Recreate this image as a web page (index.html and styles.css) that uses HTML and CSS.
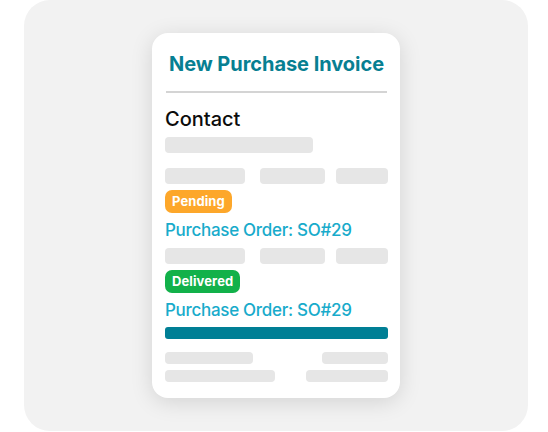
FILE: index.html
```html
<!DOCTYPE html>
<html>
<head>
<meta charset="utf-8">
<link rel="stylesheet" href="styles.css">
</head>
<body>
<div class="panel">
  <div class="card">
    <h1 class="title">New Purchase Invoice</h1>
    <div class="divider"></div>
    <div class="label">Contact</div>
    <div class="skel skel-contact"></div>
    <div class="row3 row-a">
      <div class="skel w80"></div>
      <div class="skel w65"></div>
      <div class="skel w52"></div>
    </div>
    <div class="badge pending">Pending</div>
    <div class="order">Purchase Order: SO#29</div>
    <div class="row3 row-b">
      <div class="skel w80"></div>
      <div class="skel w65"></div>
      <div class="skel w52"></div>
    </div>
    <div class="badge delivered">Delivered</div>
    <div class="order order-b">Purchase Order: SO#29</div>
    <div class="progress"></div>
    <div class="split split-a">
      <div class="skel thin w88"></div>
      <div class="skel thin w66"></div>
    </div>
    <div class="split split-b">
      <div class="skel thin w110"></div>
      <div class="skel thin w82"></div>
    </div>
  </div>
</div>
</body>
</html>
```
FILE: styles.css
```css
* { box-sizing: border-box; }
html, body { margin: 0; padding: 0; background: #ffffff; }
body {
  width: 548px;
  height: 432px;
  overflow: hidden;
  font-family: Inter, "Liberation Sans", sans-serif;
}
.panel {
  margin-left: 24px;
  width: 504px;
  height: 431px;
  background: #f2f2f2;
  border-radius: 26px;
  display: flex;
  justify-content: center;
  align-items: flex-start;
}
.card {
  margin-top: 33px;
  width: 248px;
  height: 365px;
  background: #ffffff;
  border-radius: 16px;
  box-shadow: 0 4px 22px rgba(0, 0, 0, 0.13);
  padding: 19px 12px 0 13px;
  display: flex;
  flex-direction: column;
}
.title {
  margin: 0;
  font-size: 20px;
  line-height: 24px;
  font-weight: 700;
  color: #077f92;
  text-align: center;
  letter-spacing: -0.05px;
}
.divider {
  margin: 15px 1px 0 1px;
  height: 2px;
  background: #d4d4d4;
}
.label {
  margin-top: 14px;
  font-size: 20px;
  line-height: 24px;
  font-weight: 500;
  color: #0c0c0c;
}
.skel {
  background: #e6e6e6;
  border-radius: 4px;
  height: 16px;
}
.skel.thin { height: 12px; }
.skel-contact { margin-top: 6px; width: 148px; }
.row3 { display: flex; }
.row3 .w80 { width: 80px; }
.row3 .w65 { width: 65px; margin-left: 15px; }
.row3 .w52 { width: 52px; margin-left: 11px; }
.row-a { margin-top: 15px; }
.row-b { margin-top: 7px; }
.badge {
  align-self: flex-start;
  margin-top: 6px;
  height: 23px;
  line-height: 23px;
  padding: 0 7px;
  border-radius: 7px;
  color: #ffffff;
  font-size: 13px;
  font-weight: 700;
  letter-spacing: 0.1px;
}
.pending { background: #fda72a; }
.delivered { background: #12b14a; }
.order {
  margin-top: 6px;
  font-size: 17px;
  line-height: 22px;
  font-weight: 500;
  color: #18abcb;
  letter-spacing: -0.3px;
}
.order-b { margin-top: 6px; }
.progress {
  margin-top: 6px;
  height: 12px;
  background: #007f95;
  border-radius: 3px;
}
.split { display: flex; justify-content: space-between; }
.split-a { margin-top: 13px; }
.split-b { margin-top: 6px; }
.w88 { width: 88px; }
.w66 { width: 66px; }
.w110 { width: 110px; }
.w82 { width: 82px; }
```
